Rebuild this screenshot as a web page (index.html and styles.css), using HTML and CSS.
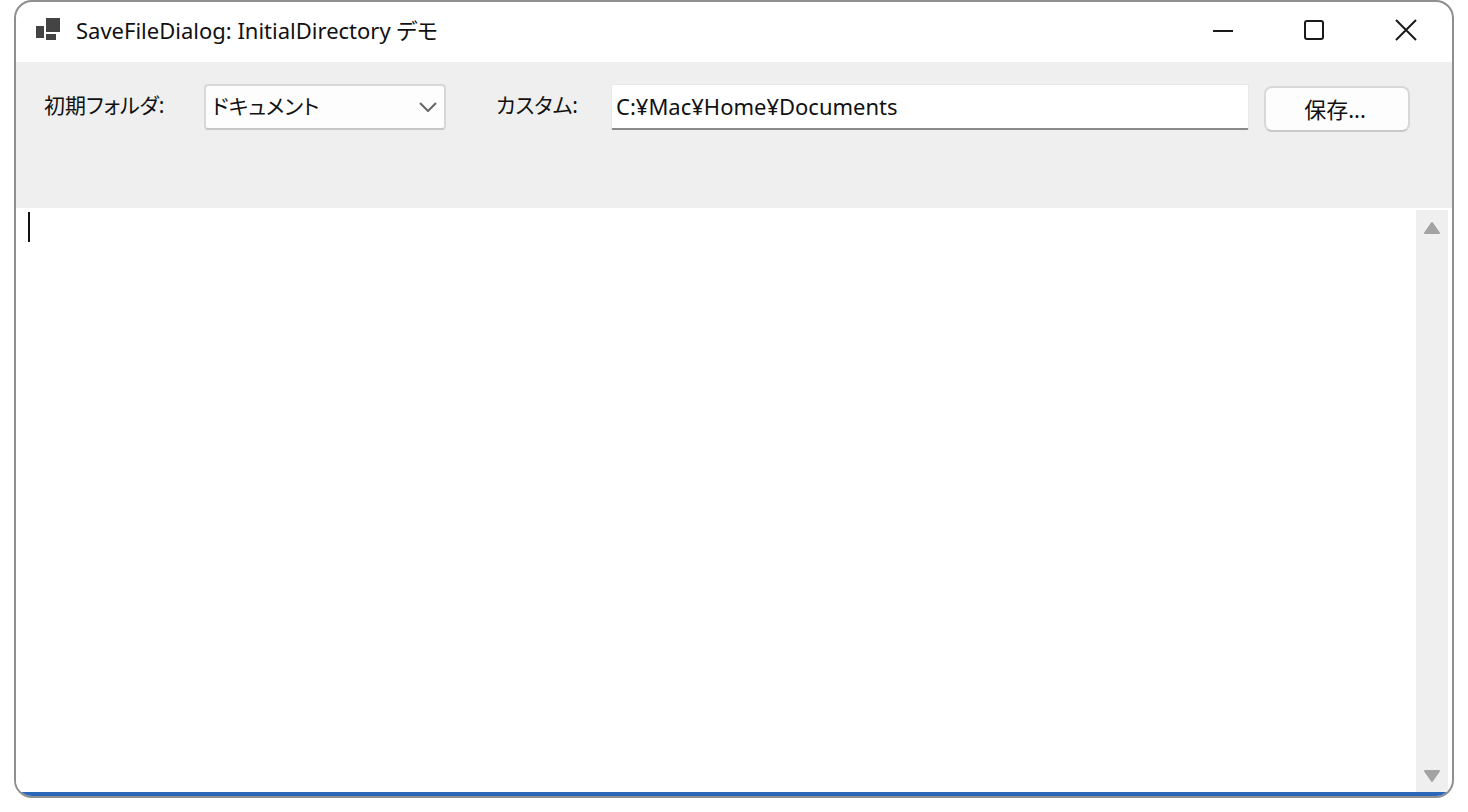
FILE: index.html
```html
<!DOCTYPE html>
<html lang="ja">
  <head>
    <meta charset="utf-8" />
    <meta name="viewport" content="width=device-width, initial-scale=1" />
    <title>SaveFileDialog: InitialDirectory デモ</title>
    <link rel="stylesheet" href="styles.css">
  </head>
  <body>
    <div class="window">
      <header class="titlebar">
        <svg class="app-icon" viewBox="0 0 26 24" aria-hidden="true">
          <rect x="0" y="8" width="8" height="12" />
          <rect x="10" y="0" width="14" height="14" />
          <rect x="10" y="16" width="10" height="6" />
        </svg>
        <h1 class="title">SaveFileDialog: InitialDirectory デモ</h1>
        <div class="window-controls">
          <button type="button" class="window-button" aria-label="最小化">
            <svg viewBox="0 0 24 24"><path d="M3 13h20" /></svg>
          </button>
          <button type="button" class="window-button" aria-label="最大化">
            <svg viewBox="0 0 24 24"><rect x="3" y="3" width="18" height="18" rx="2" /></svg>
          </button>
          <button type="button" class="window-button" aria-label="閉じる">
            <svg viewBox="0 0 24 24"><path d="M2 2l20 20M22 2L2 22" /></svg>
          </button>
        </div>
      </header>
      <form class="toolbar">
        <label class="label" for="folder">初期フォルダ:</label>
        <div class="select">
          <select id="folder">
            <option>ドキュメント</option>
          </select>
          <svg class="chevron" viewBox="0 0 18 10" aria-hidden="true"><path d="M1 1l8 8 8-8" /></svg>
        </div>
        <label class="label label--custom" for="custom">カスタム:</label>
        <input class="textbox" id="custom" type="text" value="C:¥Mac¥Home¥Documents" />
        <button type="button" class="save">保存...</button>
      </form>
      <main class="editor">
        <textarea class="editor-text" aria-label="本文"></textarea>
        <span class="caret"></span>
        <div class="scrollbar">
          <svg viewBox="0 0 18 14" aria-hidden="true"><path d="M9 2l7 10H2z" /></svg>
          <svg viewBox="0 0 18 14" aria-hidden="true"><path d="M9 12L2 2h14z" /></svg>
        </div>
      </main>
    </div>
  </body>
</html>
```

FILE: styles.css
```css
* {
  box-sizing: border-box;
}

body {
  margin: 0;
  padding: 0 14px 14px;
  height: 100vh;
  background: #fff;
  color: #111;
  font-family: "Noto Sans", "Noto Sans CJK JP", sans-serif;
  font-size: 22px;
}

button,
input,
select,
textarea {
  font: inherit;
  color: inherit;
}

.window {
  display: flex;
  flex-direction: column;
  height: 100%;
  overflow: hidden;
  border: 2px solid #8f8f8f;
  border-radius: 18px;
  background: #fff;
}

.titlebar {
  display: flex;
  flex: none;
  align-items: center;
  height: 60px;
  padding: 0 0 4px 20px;
}

.app-icon {
  width: 26px;
  height: 24px;
  margin-right: 14px;
  fill: #444;
}

.title {
  margin: 0;
  font-size: 22px;
  font-weight: 400;
  line-height: 32px;
  white-space: nowrap;
  font-feature-settings: "palt";
}

.window-controls {
  display: flex;
  margin-left: auto;
}

.window-button {
  display: flex;
  align-items: center;
  justify-content: center;
  width: 92px;
  height: 56px;
  padding: 0;
  border: 0;
  background: none;
}

.window-button svg {
  width: 24px;
  height: 24px;
  fill: none;
  stroke: #1a1a1a;
  stroke-width: 2;
}

.toolbar {
  display: flex;
  flex: none;
  align-items: flex-start;
  height: 146px;
  padding: 22px 42px 0 28px;
  background: #efefef;
}

.label {
  flex: none;
  width: 160px;
  font-size: 21px;
  line-height: 42px;
  white-space: nowrap;
  font-feature-settings: "palt";
}

.label--custom {
  width: 115px;
  margin-left: 50px;
}

.select {
  position: relative;
  flex: none;
  width: 242px;
}

.select select {
  display: block;
  width: 100%;
  height: 46px;
  padding: 0 32px 2px 6px;
  appearance: none;
  border: 2px solid #d8d8d8;
  border-bottom-color: #c6c6c6;
  border-radius: 4px;
  background: #fdfdfd;
  font-size: 21px;
  font-feature-settings: "palt";
}

.chevron {
  position: absolute;
  top: 18px;
  right: 9px;
  width: 18px;
  height: 10px;
  fill: none;
  stroke: #666;
  stroke-width: 2;
  pointer-events: none;
}

.textbox {
  flex: 1;
  min-width: 0;
  height: 46px;
  padding: 0 4px 2px;
  border: 1px solid #e8e8e8;
  border-bottom: 2px solid #8a8a8a;
  border-radius: 2px;
  background: #fff;
}

.save {
  flex: none;
  width: 146px;
  height: 46px;
  margin: 2px 0 0 15px;
  padding: 0 4px 2px 0;
  border: 2px solid #d8d8d8;
  border-bottom-color: #c8c8c8;
  border-radius: 8px;
  background: #fdfdfd;
}

.editor {
  position: relative;
  display: flex;
  flex: 1;
  min-height: 0;
  padding: 2px 4px 0 0;
  border-bottom: 4px solid #2b67b8;
}

.editor-text {
  flex: 1;
  padding: 0 12px;
  border: 0;
  outline: 0;
  resize: none;
  background: #fff;
}

.caret {
  position: absolute;
  top: 4px;
  left: 12px;
  width: 2px;
  height: 30px;
  background: #111;
}

.scrollbar {
  display: flex;
  flex-direction: column;
  align-items: center;
  justify-content: space-between;
  width: 32px;
  padding: 11px 0 9px;
  background: #efefef;
}

.scrollbar svg {
  width: 18px;
  height: 14px;
  fill: #a3a3a3;
  stroke: #a3a3a3;
  stroke-width: 2;
  stroke-linejoin: round;
}
```
